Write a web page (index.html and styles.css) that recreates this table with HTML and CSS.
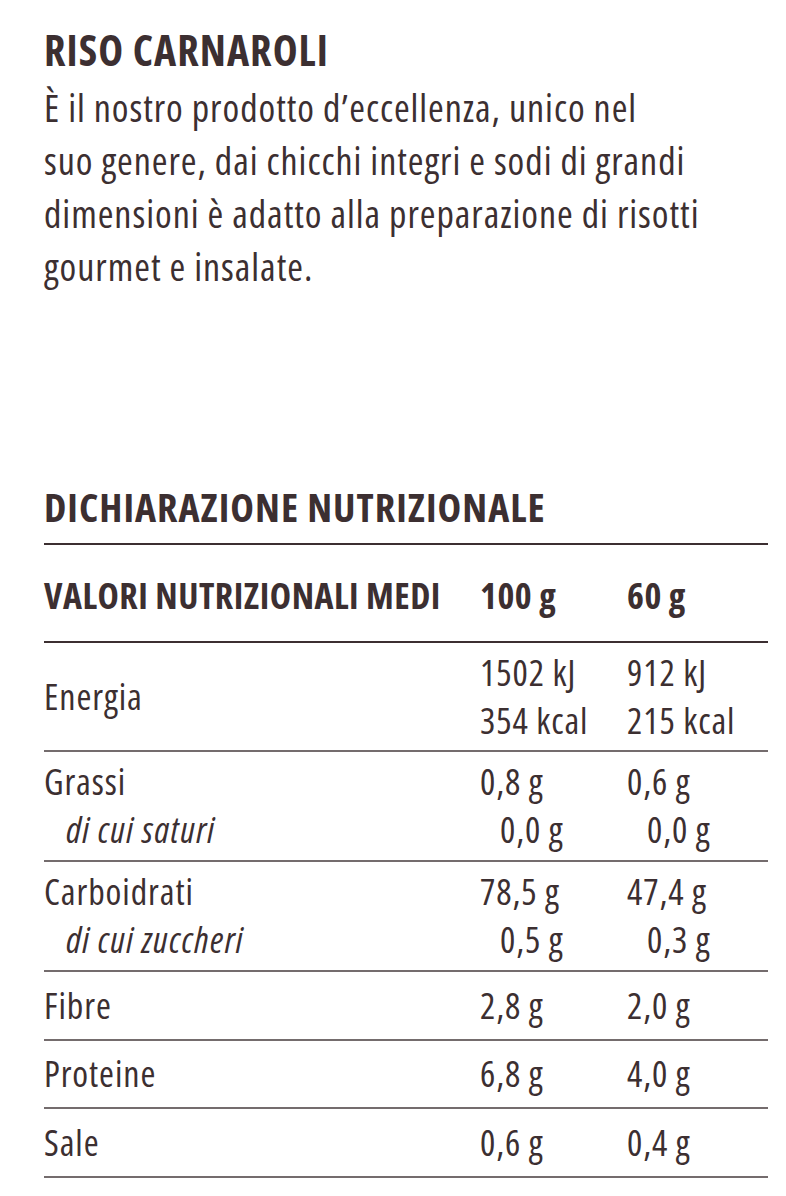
FILE: index.html
```html
<!DOCTYPE html>
<html lang="it">
<head>
<meta charset="utf-8">
<title>Riso Carnaroli</title>
<link rel="stylesheet" href="styles.css">
</head>
<body>
<main class="page">
  <section class="product">
    <h1 class="title">RISO CARNAROLI</h1>
    <p class="desc">È il nostro prodotto d’eccellenza, unico nel<br>suo genere, dai chicchi integri e sodi di grandi<br>dimensioni è adatto alla preparazione di risotti<br>gourmet e insalate.</p>
  </section>
  <section class="nutrition">
    <h2 class="heading">DICHIARAZIONE NUTRIZIONALE</h2>
    <table class="table">
      <colgroup><col class="c-label"><col class="c-100"><col class="c-60"></colgroup>
      <thead>
        <tr class="head">
          <th class="lbl">VALORI NUTRIZIONALI MEDI</th>
          <th>100 g</th>
          <th>60 g</th>
        </tr>
      </thead>
      <tbody>
        <tr class="double first">
          <td class="lbl mid">Energia</td>
          <td><div>1502 kJ</div><div>354 kcal</div></td>
          <td><div>912 kJ</div><div>215 kcal</div></td>
        </tr>
        <tr class="double">
          <td class="lbl"><div>Grassi</div><div class="sub">di cui saturi</div></td>
          <td><div>0,8 g</div><div class="subv">0,0 g</div></td>
          <td><div>0,6 g</div><div class="subv">0,0 g</div></td>
        </tr>
        <tr class="double">
          <td class="lbl"><div>Carboidrati</div><div class="sub">di cui zuccheri</div></td>
          <td><div>78,5 g</div><div class="subv">0,5 g</div></td>
          <td><div>47,4 g</div><div class="subv">0,3 g</div></td>
        </tr>
        <tr class="single">
          <td class="lbl">Fibre</td>
          <td>2,8 g</td>
          <td>2,0 g</td>
        </tr>
        <tr class="single">
          <td class="lbl">Proteine</td>
          <td>6,8 g</td>
          <td>4,0 g</td>
        </tr>
        <tr class="single">
          <td class="lbl">Sale</td>
          <td>0,6 g</td>
          <td>0,4 g</td>
        </tr>
      </tbody>
    </table>
  </section>
</main>
</body>
</html>
```
FILE: styles.css
```css
html, body {
  margin: 0;
  padding: 0;
  background: #ffffff;
}

body {
  font-family: "Open Sans", "Roboto Condensed", sans-serif;
  font-stretch: 75%;
  color: #3c2f31;
}

.page {
  padding: 25px 18px 0 44px;
}

.title {
  margin: 0;
  font-size: 42px;
  line-height: 50px;
  font-weight: 700;
  letter-spacing: 1.05px;
}

.desc {
  margin: 6px 0 0;
  font-size: 38px;
  line-height: 53px;
  font-weight: 400;
  letter-spacing: 0.95px;
  white-space: nowrap;
}

.nutrition {
  margin-top: 190px;
}

.heading {
  margin: 0 0 12px;
  font-size: 40px;
  line-height: 48px;
  font-weight: 700;
  letter-spacing: 1px;
}

.table {
  width: 724px;
  border-collapse: collapse;
  table-layout: fixed;
  font-size: 36px;
  line-height: 48px;
  letter-spacing: 0.9px;
}

.c-label { width: 436px; }
.c-100 { width: 147px; }
.c-60 { width: 141px; }

.table th,
.table td {
  padding: 0;
  text-align: left;
  vertical-align: top;
  white-space: nowrap;
}

.head th {
  font-weight: 700;
  letter-spacing: 0.5px;
  padding: 27px 0 21px;
  border-top: 2px solid #3c2f31;
  border-bottom: 2px solid #3c2f31;
}

.table tbody td {
  border-bottom: 2px solid #746c6d;
  font-weight: 400;
}

.double td {
  padding: 6px 0;
}

.double.first td {
  padding: 5.5px 0;
}

.single td {
  padding: 9.5px 0 9px;
}

.table td.mid {
  vertical-align: middle;
}

.sub {
  padding-left: 22px;
  font-style: italic;
  letter-spacing: 1.3px;
}

.subv {
  padding-left: 20px;
}
```
